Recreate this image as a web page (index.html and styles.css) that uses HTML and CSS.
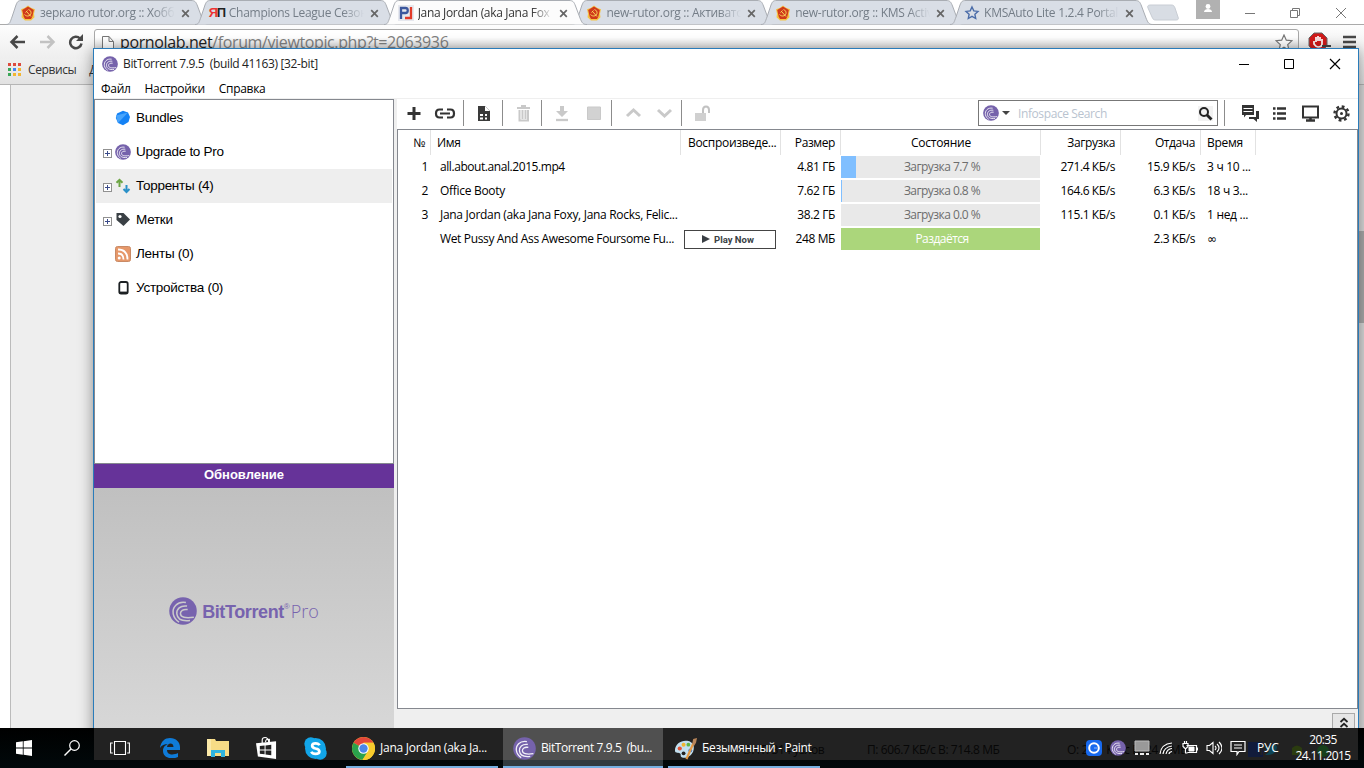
FILE: index.html
```html
<!DOCTYPE html>
<html lang="ru">
<head>
<meta charset="utf-8">
<title>BitTorrent 7.9.5</title>
<link rel="stylesheet" href="styles.css">
</head>
<body>
<svg class="defs" width="0" height="0">
  <symbol id="bt" viewBox="0 0 24 24"><circle cx="12" cy="12" r="11.8"/><path d="M14.500 4.800C7 3.500 2.600 9 3.600 14.500c.6 3 2.400 5.400 5 7M15.500 7.800C9.500 7 6.300 10.500 6.700 14.500c.5 4.200 4.500 6.500 11.300 5.700M16 10.800c-4-.6-6.300 1.200-6.200 3.600.2 3 4 4 11.500 3" fill="none" stroke="#fff" stroke-opacity=".9" stroke-width="1.350"/></symbol>
  <symbol id="btflat" viewBox="0 0 24 24"><circle cx="12" cy="12" r="11.8"/><path d="M14.500 4.800C7 3.500 2.600 9 3.600 14.500c.6 3 2.400 5.400 5 7M15.500 7.800C9.500 7 6.300 10.500 6.700 14.500c.5 4.200 4.500 6.500 11.300 5.700M16 10.800c-4-.6-6.300 1.200-6.200 3.600.2 3 4 4 11.500 3" fill="none" stroke="#cbcbcb" stroke-width="1.300"/></symbol>
  <symbol id="tab" viewBox="0 0 206 25"><path d="M1 24.500C5 24.500 5 22 7 17L11 5C12.500 1.500 13 .5 17 .5H186C190 .5 191 2 192.500 6L197 18C199 23 200 24.500 204 24.500"/></symbol>
  <symbol id="rutor" viewBox="0 0 16 16"><path d="M8 .5l3 2.200 4 1.500-1 4.500.5 3.500-3.500 3.300H5L1.500 12.200 2 8.700 1 4.200l4-1.500z" fill="#f6c344"/><path d="M8 1.500l5.800 3.500-1.500 6.700L11 14H5L3.700 11.700 2.200 5z" fill="#d03a1c"/><path d="M8.500 4.500c4 1.500 3 6.500-1 6.500-1.500 0-2.500-1-3-1.500M5.500 7.500l2-2M6.500 6.500l4.500 5" fill="none" stroke="#f9d75a" stroke-width="1"/></symbol>
  <symbol id="x" viewBox="0 0 9 9"><path d="M1.200 1.200l6.600 6.600M7.800 1.200L1.200 7.800" fill="none" stroke="currentColor" stroke-width="1.700"/></symbol>
</svg>
<div class="desktop">
  <div class="browser">
    <div class="tabs">
      <div class="tab"><svg class="shape"><use href="#tab"/></svg><svg class="fav"><use href="#rutor"/></svg><span class="label">зеркало rutor.org :: Хобби</span><svg class="close"><use href="#x"/></svg></div>
      <div class="tab"><svg class="shape"><use href="#tab"/></svg><span class="fav yap"><b>Я</b>П</span><span class="label">Champions League Сезон</span><svg class="close"><use href="#x"/></svg></div>
      <div class="tab active"><svg class="shape"><use href="#tab"/></svg><svg class="fav" viewBox="0 0 16 16"><path d="M0 0h16v16H0z" fill="#e6e8ee"/><path d="M3 14V3h4.500c3 0 3 5 0 5H4" fill="none" stroke="#3b579d" stroke-width="2.300"/><path d="M13 2v11H7" fill="none" stroke="#e23a28" stroke-width="2.300"/></svg><span class="label jj">Jana Jordan (aka Jana Fox</span><svg class="close"><use href="#x"/></svg></div>
      <div class="tab"><svg class="shape"><use href="#tab"/></svg><svg class="fav"><use href="#rutor"/></svg><span class="label">new-rutor.org :: Активато</span><svg class="close"><use href="#x"/></svg></div>
      <div class="tab"><svg class="shape"><use href="#tab"/></svg><svg class="fav"><use href="#rutor"/></svg><span class="label">new-rutor.org :: KMS Activ</span><svg class="close"><use href="#x"/></svg></div>
      <div class="tab"><svg class="shape"><use href="#tab"/></svg><svg class="fav" viewBox="0 0 16 16"><path d="M8 2l1.800 3.900 4.200.5-3.100 2.900.8 4.200L8 11.400l-3.700 2.100.8-4.200L2 6.400l4.200-.5z" fill="none" stroke="#4a6ca8" stroke-width="1.400"/></svg><span class="label">KMSAuto Lite 1.2.4 Portal</span><svg class="close"><use href="#x"/></svg></div>
      <svg class="newtab" viewBox="0 0 34 17"><path d="M5 1h20c3 0 3 1 4 3l3 9c1 2 0 3-2 3H10c-3 0-3-1-4-3L2 4C1 2 2 1 5 1z" fill="#d8dde4" stroke="#c8cdd4"/></svg>
      <div class="user"><svg width="24" height="19"><circle cx="12" cy="6.500" r="2.400" fill="#fff"/><path d="M8 12c0-4 8-4 8 0z" fill="#fff"/></svg></div>
      <svg class="winbtns" viewBox="0 0 110 14" fill="none" stroke="#777"><path d="M0 7.500h10M45.500 4.500h7v7h-7zM47.500 4.500v-2h7v7h-2M91 2l10 10M101 2L91 12"/></svg>
    </div>
    <div class="navbar">
      <svg class="nav" viewBox="0 0 80 16" fill="none"><path d="M16 8H3M8.500 2L2.500 8l6 6" stroke="#484848" stroke-width="2.500"/><path d="M31 8h13M38.500 2l6 6-6 6" stroke="#c2c2c2" stroke-width="2.500"/><path d="M71 4.500a5.700 5.700 0 1 0 1.500 5" stroke="#484848" stroke-width="2.500"/><path d="M74 0v7h-7z" fill="#484848"/></svg>
      <div class="omni"><svg width="12" height="17" viewBox="0 0 12 17"><path d="M.5.500h6.500l4.500 5V16H.5zM7 .5v5h4.500" fill="#fff" stroke="#777"/></svg><span class="url"><b>pornolab.net</b>/forum/viewtopic.php?t=2063936</span><svg class="star" viewBox="0 0 18 18"><path d="M9 1l2.300 5.200 5.700.5-4.300 3.900 1.300 5.700L9 13.300l-5 3 1.300-5.700L1 6.700l5.700-.5z" fill="#fff" stroke="#777" stroke-width="1.200"/></svg></div>
      <svg class="abp" viewBox="0 0 24 20"><path d="M6 1h8l5 5v8l-5 5H6l-5-5V6z" fill="#d11a1a" stroke="#666"/><path d="M6 9v3q2 3 4 3 4 0 4-3V7M8 10V5M10 9V4M12 9V5" fill="none" stroke="#fff" stroke-width="1.700"/><path d="M14 14h9" stroke="#444" stroke-width="2"/></svg>
      <svg class="burger" viewBox="0 0 13 16"><path d="M0 3h13M0 8h13M0 13h13" stroke="#484848" stroke-width="2.600"/></svg>
    </div>
    <div class="bookmarks"><span class="apps"><i></i><i></i><i></i><i></i><i></i><i></i><i></i><i></i><i></i></span><span class="svc">Сервисы</span><span class="dd">Д</span></div>
    <div class="page"><div class="sheet"></div><div class="scroll"><i></i></div></div>
  </div>

  <div class="window">
    <div class="title"><svg class="bt16"><use href="#bt"/></svg><span class="caption">BitTorrent 7.9.5 &nbsp;(build 41163) [32-bit]</span>
      <svg class="ctl" viewBox="0 0 110 14" fill="none" stroke="#000"><path d="M0 7.500h10M45.500 2.500h9v9h-9z"/><path d="M91 2l10 10M101 2L91 12" stroke-width="1.200"/></svg></div>
    <div class="menu"><span>Файл</span><span>Настройки</span><span>Справка</span></div>
    <div class="body">
      <div class="side">
        <div class="tree">
          <div class="node"><span class="ex"></span><svg class="ni" viewBox="0 0 16 16"><path d="M8 .8l5 1.700 2 4.500-1.500 5-5.500 3.200-5-2.200L.8 8 2 3.500z" fill="#1482f5"/><path d="M1 5.500L13 2.500 3 13z" fill="#48a4fb"/></svg><span>Bundles</span></div>
          <div class="node"><span class="ex box"></span><svg class="ni bt16"><use href="#bt"/></svg><span>Upgrade to Pro</span></div>
          <div class="node sel"><span class="ex box"></span><svg class="ni" viewBox="0 0 16 16" fill="none" stroke-width="2"><path d="M4.500 9V2M1.500 4.800l3-3 3 3" stroke="#6da544"/><path d="M11.500 7v7M8.500 11l3 3 3-3" stroke="#2b91c8"/></svg><span>Торренты (4)</span></div>
          <div class="node"><span class="ex box"></span><svg class="ni" viewBox="0 0 16 16"><path d="M1.500 1h7L15 7.500 8.500 14 1.500 8z" fill="#3a4045"/><circle cx="5" cy="4.500" r="1.600" fill="#fff"/></svg><span>Метки</span></div>
          <div class="node"><span class="ex"></span><svg class="ni" viewBox="0 0 16 16"><rect x=".5" y=".5" width="15" height="15" rx="2" fill="#e6986a" stroke="#c98a66"/><circle cx="4.200" cy="12" r="1.500" fill="#fff"/><path d="M3 7.500q5.500 0 5.500 6M3 3.500q9.500 0 9.500 10" fill="none" stroke="#fff" stroke-width="1.800"/></svg><span>Ленты (0)</span></div>
          <div class="node"><span class="ex"></span><svg class="ni" viewBox="0 0 16 16"><rect x="4.300" y="2" width="8.400" height="11.500" rx="1.800" fill="#fff" stroke="#1c2023" stroke-width="1.800"/><path d="M4.500 12.700h8" stroke="#1c2023" stroke-width="2.200"/></svg><span>Устройства (0)</span></div>
        </div>
        <div class="update">Обновление</div>
        <div class="promo"><svg width="28" height="28" fill="#7763ae"><use href="#btflat"/></svg><span class="brand">BitTorrent</span><sup>®</sup><span class="pro">Pro</span></div>
      </div>
      <div class="main">
        <div class="tools">
          <svg class="tb" viewBox="0 0 310 28" fill="none"><path d="M16 8v13M9.500 14.500h13" stroke="#333" stroke-width="3"/><path d="M45 10.500h-3.500q-3.500 0-3.500 4t3.500 4H45M49 10.500h3.500q3.500 0 3.500 4t-3.500 4H49M42 14.500h10" stroke="#333" stroke-width="2.200"/><path d="M80 7h7l5 5v10H80z" fill="#3a3a3a"/><path d="M87 7v5h5M82 15h3v2h-3zM87 15h2v2h-2zM82 18.500h3v2h-3zM87 18.500h2v2h-2z" fill="#fff"/><path d="M65.500 1v26M104.500 1v26M143.500 1v26M213.500 1v26M283.500 1v26" stroke="#8c8c8c"/><g stroke="#c9c9c9" stroke-width="2"><path d="M119 9h13M123 7h5M121.500 11v10.500h8.500V11M124.500 11v9M127.500 11v9"/><path d="M158 21h12" stroke-width="2.300"/><path d="M162 7h4v5h4l-6 6-6-6h4z" fill="#c9c9c9" stroke="none"/><path d="M189.500 8h13v12.500h-13z" fill="#d2d2d2" stroke-width="1"/><path d="M229 17l6.500-6 6.500 6M260 11l6.500 6 6.500-6" stroke-width="3"/></g></svg>
          <svg class="lock" viewBox="0 0 18 18"><path d="M1 8h11v8H1z" fill="#d0d0d0"/><path d="M9 8V5q0-3.500 3-3.500T15 5v3" fill="none" stroke="#c2c2c2" stroke-width="2"/></svg>
          <div class="search"><svg class="bt16"><use href="#bt"/></svg><i class="caret"></i><span class="hint">Infospace Search</span><svg class="mag" viewBox="0 0 15 15"><path d="M0 0h15v15H0z" fill="#f2f2f2"/><circle cx="6" cy="6" r="4" fill="none" stroke="#222" stroke-width="2"/><path d="M9 9l4.500 4.500" stroke="#222" stroke-width="2.800"/></svg></div>
          <svg class="right" viewBox="0 0 134 28" fill="none" stroke="#333"><path d="M5.500 1v26" stroke="#8c8c8c"/><path d="M23 6h12v10H27l-2 2.500V16h-2z" fill="#333" stroke="none"/><path d="M24.500 9.500h9M24.500 12.500h9" stroke="#fff"/><path d="M37 12h3v8h-2v3l-3.500-3H30v-2h7z" fill="#333" stroke="none"/><path d="M58 9.500h9M58 14.500h9M58 19.500h9" stroke-width="2.500"/><path d="M54 9.500h2.500M54 14.500h2.500M54 19.500h2.500" stroke-width="2.500"/><path d="M84 7.500h15v11H84z" stroke-width="2"/><path d="M91.500 18v3M87 21.500h9" stroke-width="2.500"/><circle cx="122.500" cy="14.500" r="7" stroke-width="2.400" stroke-dasharray="2.800 2.698"/><circle cx="122.500" cy="14.500" r="5" stroke-width="2"/><circle cx="122.500" cy="14.500" r="1.500" fill="#333" stroke="none"/></svg>
        </div>
        <div class="list">
          <div class="row head"><span class="r no">№</span><span>Имя</span><span class="playh">Воспроизведе...</span><span class="r">Размер</span><span class="c">Состояние</span><span class="r">Загрузка</span><span class="r">Отдача</span><span>Время</span></div>
          <div class="row"><span class="r num">1</span><span class="name n1">all.about.anal.2015.mp4</span><span></span><span class="r">4.81 ГБ</span><span class="bar"><i style="width:7.7%"></i><em>Загрузка 7.7 %</em></span><span class="r">271.4 КБ/s</span><span class="r">15.9 КБ/s</span><span class="eta">3 ч 10 ...</span></div>
          <div class="row"><span class="r num">2</span><span class="name">Office Booty</span><span></span><span class="r">7.62 ГБ</span><span class="bar"><i style="width:0.6%"></i><em>Загрузка 0.8 %</em></span><span class="r">164.6 КБ/s</span><span class="r">6.3 КБ/s</span><span class="eta">18 ч 3...</span></div>
          <div class="row"><span class="r num">3</span><span class="name">Jana Jordan (aka Jana Foxy, Jana Rocks, Felic...</span><span></span><span class="r">38.2 ГБ</span><span class="bar"><i style="width:0%"></i><em>Загрузка 0.0 %</em></span><span class="r">115.1 КБ/s</span><span class="r">0.1 КБ/s</span><span class="eta">1 нед ...</span></div>
          <div class="row"><span></span><span class="name n4">Wet Pussy And Ass Awesome Foursome Fu...</span><span class="play"><b><svg width="8" height="8"><path d="M0 0l8 4-8 4z" fill="#3a3f44"/></svg>Play Now</b></span><span class="r">248 МБ</span><span class="bar seed"><em>Раздаётся</em></span><span></span><span class="r">2.3 КБ/s</span><span class="eta inf">∞</span></div>
        </div>
        <div class="foot"><span class="up"><svg width="10" height="12" fill="none" stroke="#222" stroke-width="1.800"><path d="M1.500 5L5 1.800 8.500 5M1.500 10L5 6.800 8.500 10"/></svg></span></div>
      </div>
    </div>
  </div>

  <div class="taskbar">
    <div class="ghost"><span class="g1">DHT: 314 узлов</span><span class="g2">П: 606.7 КБ/с В: 714.8 МБ</span><span class="g3">О: 21.1 КБ/с В: 24.4 МБ</span><i class="fb">f</i><svg class="gi" width="80" height="16"><path d="M2 4q6 3 8-1 4-2 5 2-1 9-12 8l4-3z" fill="#0c4455"/><path d="M30 6q5-5 10 0v7H30z" fill="#2b3c10"/><circle cx="61" cy="9" r="6" fill="#17401b"/></svg></div>
    <div class="pins">
      <svg viewBox="0 0 16 16" class="p win"><path d="M0 2.300L6.800 1.300V7.600H0zM7.600 1.200L16 0v7.600H7.600zM0 8.400h6.800v6.300L0 13.700zM7.600 8.400H16V16l-8.400-1.200z" fill="#fff"/></svg>
      <svg viewBox="0 0 16 16" class="p"><circle cx="10.500" cy="5.500" r="4.800" fill="none" stroke="#fff" stroke-width="1.200"/><path d="M7 9L.5 15.500" stroke="#fff" stroke-width="1.400"/></svg>
      <svg viewBox="0 0 20 16" class="p tv"><path d="M4.500 1.500h11v13h-11zM2.800 3H.6v10h2.200M17.200 3h2.200v10h-2.200" fill="none" stroke="#fff" stroke-width="1.100"/></svg>
      <svg viewBox="0 0 20 20" class="p big"><path d="M0 10C1 3 5 0 10 0c6 0 10 4 10 9v3H7c0 5 6 5.500 11 3v4c-6 3-15 1-15-6 0-4 2-5.500 5-7C4 6 2 7 0 10zm7-1h6.500C13.500 4 7.500 4.500 7 9z" fill="#0f7bd8"/></svg>
      <svg viewBox="0 0 22 18" class="p fold"><path d="M0 0h8l1 2h13v15H0z" fill="#f7dc86"/><path d="M0 0h4v17H0z" fill="#fbe9a8"/><path d="M4 18v-7h14v7h-4v-4H8v4z" fill="#2fb4df"/></svg>
      <svg viewBox="0 0 22 24" class="p store"><path d="M6.500 8V4q0-3 3-3t4 5M10 6q0-4 4-3v4" fill="none" stroke="#fff" stroke-width="1.200"/><path d="M0 7l21-2v18.500L2 21z" fill="#fff"/><path d="M4 10l5-.5v4H4zM10 9.300l6-.6v4.800h-6zM4 14.500h5v4L4 18zM10 14.500h6v5l-6-.6z" fill="#222"/></svg>
      <svg viewBox="0 0 22 22" class="p skype"><circle cx="11" cy="11" r="10" fill="#12a5e8"/><circle cx="6.500" cy="6.500" r="6.200" fill="#12a5e8"/><circle cx="15.500" cy="15.500" r="6.200" fill="#12a5e8"/><path d="M14.800 8Q14 6 11 6 7.800 6 7.800 8.300 7.800 10.200 11 11q3.700.7 3.700 2.800 0 2.300-3.700 2.300-3 0-4-2" fill="none" stroke="#fff" stroke-width="2.600"/></svg>
    </div>
    <div class="apps-run">
      <div class="task"><svg class="ti" viewBox="0 0 22 22"><circle cx="11" cy="11" r="11" fill="#f7cb2d"/><path d="M11 11L1.500 5.500A11 11 0 0 1 20.500 5.500H11z" fill="#e2473a"/><path d="M11 11L1.500 5.500A11 11 0 0 0 10 22l5-8z" fill="#2ba24c"/><path d="M15 14l-5 8A11 11 0 0 0 20.500 5.500H11z" fill="#f7cb2d"/><circle cx="11" cy="11" r="5" fill="#fff"/><circle cx="11" cy="11" r="4" fill="#4a86e8"/></svg><span>Jana Jordan (aka Ja...</span></div>
      <div class="task cur"><svg class="ti"><use href="#bt"/></svg><span class="t2">BitTorrent 7.9.5 &nbsp;(bu...</span></div>
      <div class="task"><svg class="ti" viewBox="0 0 24 24"><path d="M1 14C1 7 8 3 14 4c6 1 8 6 6 11s-8 8-12 6c-2-1 0-3-2-4s-5 0-5-3z" fill="#c2dfef"/><circle cx="6" cy="12" r="2.200" fill="#e45335"/><circle cx="10" cy="8" r="2.100" fill="#f2b632"/><circle cx="15" cy="8" r="2" fill="#5eb447"/><circle cx="17" cy="14" r="2" fill="#4580d0"/><circle cx="10" cy="17" r="2" fill="#222"/><path d="M13 23l7-16" stroke="#e59a45" stroke-width="2.300"/><path d="M19 7l1-5 4-1-1 5-2 3z" fill="#b88559"/></svg><span class="t3">Безымянный - Paint</span></div>
    </div>
    <div class="tray">
      <svg class="t" viewBox="0 0 16 16"><rect width="16" height="16" rx="4" fill="#1769ee"/><circle cx="8" cy="8" r="4.800" fill="none" stroke="#fff" stroke-width="2"/><path d="M8 8h3" stroke="#8bb9ff"/></svg>
      <svg class="t"><use href="#bt"/></svg>
      <svg class="t" viewBox="0 0 16 16"><path d="M1 1h14v10H1z" fill="#999" stroke="#bbb"/><path d="M1 14h3M6 14h4M12 14h3" stroke="#eee" stroke-width="2"/></svg>
      <svg class="t" viewBox="0 0 16 16" fill="none" stroke="#fff" stroke-width="1.200"><path d="M2 14Q3 4 14 3M5 14Q6 7 14 6M8 14q1-5 6-5.500M11 14q0-2 3-2.500"/></svg>
      <svg class="t" viewBox="0 0 16 16" fill="none" stroke="#fff"><path d="M4.500 5.500h10v7h-9M1 3.500h5v3l-2 2H3l-2-2zM2.500 1v2M4.500 1v2M3.500 8v5h2M15.500 7.500v3" stroke-width="1.200"/><path d="M7 7h5v4H7z" fill="#fff"/></svg>
      <svg class="t" viewBox="0 0 16 16" fill="none" stroke="#fff" stroke-width="1.100"><path d="M1 5.500h2.500L7 2.500v11L3.500 10.500H1zM9 6q2 2 0 4M11 4q4 4 0 8M13 2q6 6 0 12"/></svg>
      <svg class="t" viewBox="0 0 16 16" fill="none" stroke="#fff" stroke-width="1.200"><path d="M1 1.500h14v10H9L7 14.500v-3H1zM4 5h8M4 8h8"/></svg>
      <span class="lang">РУС</span>
      <div class="clock"><span>20:35</span><span>24.11.2015</span></div>
    </div>
  </div>
</div>
</body>
</html>
```
FILE: styles.css
```css
* { box-sizing: border-box; }
body { margin: 0; font: 12px/16px "Open Sans", "Noto Sans", sans-serif; color: #000; overflow: hidden; }
svg { display: block; flex: none; }
span { white-space: nowrap; }
.defs { position: absolute; }
.desktop { position: relative; width: 1364px; height: 768px; overflow: hidden; background: #fff; }
#bt circle { fill: #7562ab; }

/* browser behind the client window */
.browser { display: flex; flex-direction: column; height: 768px; }
.tabs { display: flex; align-items: flex-start; height: 25px; padding-left: 5px; border-bottom: 1px solid #aaa; }
.tab { position: relative; display: flex; align-items: center; flex: none; width: 206px; height: 25px; margin-right: -17.2px; padding: 1px 0 0 15px; color: #747d87; }
.shape { position: absolute; left: 0; top: 0; width: 206px; height: 25px; fill: #d9dee6; stroke: #a9adb3; z-index: -1; }
.tab.active { z-index: 2; color: #333; }
.tab.active .shape { fill: #fcfcfc; }
.tabs, .tab { isolation: isolate; }
.fav { width: 16px; height: 16px; margin-right: 4px; flex: none; }
.yap { font: bold 13px/16px "Liberation Sans", sans-serif; letter-spacing: -1.5px; color: #222; }
.yap b { color: #e33; }
.label { width: 135px; overflow: hidden; letter-spacing: -.28px; -webkit-mask-image: linear-gradient(90deg, #000 84%, transparent); mask-image: linear-gradient(90deg, #000 84%, transparent); }
.jj { letter-spacing: -.32px; }
.close { width: 9px; height: 9px; margin-left: 6px; color: #666; }
.newtab { width: 34px; height: 17px; margin: 4px 0 0 8px; }
.user { width: 24px; height: 19px; margin-left: 16px; background: #b1b1b1; }
.winbtns { width: 110px; height: 14px; margin: 6px 0 0 25px; }
.navbar { display: flex; align-items: flex-start; height: 34px; background: linear-gradient(#fdfdfd, #eee); padding: 4px 0 0 9px; }
.nav { width: 80px; height: 16px; margin: 5px 5px 0 0; }
.omni { display: flex; width: 1205px; height: 27px; border: 1px solid #a8a8a8; border-radius: 3px; background: linear-gradient(#fff 30%, #ddd 75%); padding: 6px 5px 0 7px; }
.url { font-size: 16px; line-height: 22px; margin: -5px 0 0 6px; color: #808080; letter-spacing: -.38px; }
.url b { font-weight: 400; color: #222; }
.star { width: 18px; height: 18px; margin: -2px 0 0 auto; }
.abp { width: 24px; height: 20px; margin: 3px 0 0 9px; }
.burger { width: 13px; height: 16px; margin: 5px 0 0 11px; }
.bookmarks { display: flex; align-items: center; height: 26px; border-bottom: 1px solid #b5b5b5; background: linear-gradient(#efefef, #e2e2e2); padding: 0 0 4px 8px; color: #333; }
.svc { letter-spacing: -.4px; }
.apps { display: grid; grid-template-columns: repeat(3, 3px); gap: 2px; margin-right: 7px; }
.apps i { height: 3px; background: #dd4b3e; }
.apps i:nth-child(4), .apps i:nth-child(7) { background: #3aa757; }
.apps i:nth-child(5) { background: #4285f4; }
.apps i:nth-child(6), .apps i:nth-child(8), .apps i:nth-child(9) { background: #f2b632; }
.dd { margin-left: 13px; }
.page { flex: 1; display: flex; padding-left: 10px; }
.sheet { flex: 1; border-left: 1px solid #bbb; background: #eee; }
.scroll { width: 17px; background: #dadada; padding-top: 146px; }
.scroll i { display: block; height: 92px; background: #aaa; }

/* client window */
.window { position: absolute; left: 93px; top: 48px; width: 1266px; height: 712px; display: flex; flex-direction: column; border: 1px solid #2a7cba; background: #fff; box-shadow: 0 2px 14px rgba(0,0,0,.42); }
.title { display: flex; align-items: center; height: 29px; padding: 0 9px 0 8px; }
.bt16 { width: 16px; height: 16px; }
.caption { margin-left: 5px; letter-spacing: -.36px; color: #222; }
.ctl { width: 110px; height: 14px; margin-left: auto; }
.menu { display: flex; gap: 14px; height: 20px; padding: 3px 0 0 7px; letter-spacing: -.3px; }
.body { flex: 1; display: flex; gap: 3px; background: #efefef; padding-top: 1px; }
.side { width: 300px; display: flex; flex-direction: column; font-family: "Liberation Sans", Arial, sans-serif; }
.tree { height: 365px; border: 1px solid #85888f; background: #fff; padding: 1px; }
.node { display: flex; align-items: center; height: 34px; padding-left: 7px; font-size: 13.5px; letter-spacing: -.27px; }
.sel { background: #eee; }
.ex { width: 9px; height: 9px; margin: 2px 3px 0 0; }
.box { border: 1px solid #919191; background: linear-gradient(#3b4b8a, #3b4b8a) center/5px 1px no-repeat, linear-gradient(#3b4b8a, #3b4b8a) center/1px 5px no-repeat, #fff; }
.ni { width: 16px; height: 16px; margin-right: 5px; }
.update { height: 24px; background: #663399; color: #fff; font: bold 13px/22px "Liberation Sans", Arial, sans-serif; text-align: center; }
.promo { flex: 1; display: flex; justify-content: center; padding-top: 109px; background: linear-gradient(#c0c0c0, #d7d7d7 240px); color: #7763ae; }
.brand { font: bold 18px/30px "Liberation Sans", Arial, sans-serif; letter-spacing: -.4px; margin-left: 5px; }
.promo sup { font-size: 8px; line-height: 20px; }
.pro { font: 300 18px/28px "Open Sans", sans-serif; margin-left: 1px; }
.main { flex: 1; display: flex; flex-direction: column; }
.tools { display: flex; align-items: flex-start; height: 30px; background: #fff; }
.tb { width: 310px; height: 28px; margin-left: 1px; }
.lock { width: 18px; height: 18px; margin: 6px 0 0 -14px; }
.search { display: flex; align-items: center; width: 240px; height: 26px; margin: 1px 0 0 266px; border: 1px solid #777; padding: 0 4px; color: #b9c3cf; }
.hint { padding-top: 2px; letter-spacing: -.4px; }
.caret { border: 4px solid transparent; border-top-color: #444; border-bottom: 0; margin: 0 8px 0 3px; }
.mag { width: 15px; height: 15px; margin-left: auto; }
.right { width: 134px; height: 28px; margin-left: 1px; }
.list { height: 580px; border: 1px solid #85888f; background: #fff; }
.row { display: grid; grid-template-columns: 33px 250px 100px 60px 200px 80px 80px 55px; height: 24px; align-items: center; letter-spacing: -.3px; }
.row > span { padding: 0 6px; }
.head { height: 25px; }
.head > span { line-height: 25px; border-right: 1px solid #e2e2e2; padding-right: 5px; }
.head .playh, .head .c { letter-spacing: -.2px; }
.r { text-align: right; }
.c { text-align: center; }
.row > .r { letter-spacing: -.4px; }
.row .num { padding-right: 3px; }
.row .name { padding-left: 9px; }
.row .n1 { letter-spacing: -.43px; }
.row .n4 { letter-spacing: -.35px; }
.row .inf { font-family: "DejaVu Sans", sans-serif; }
.row .playh { padding: 0 0 0 7px; letter-spacing: -.3px; }
.row .bar { position: relative; height: 22px; margin-right: 1px; padding: 0 0 0 3px; background: #e9e9e9; color: #6d6d6d; text-align: center; line-height: 22px; letter-spacing: -.55px; }
.bar i { position: absolute; left: 0; top: 0; height: 22px; background: #80bfff; }
.bar em { position: relative; font-style: normal; }
.row .seed { background: #abd67b; color: #fff; }
.row .play { padding: 0 5px 0 3px; }
.play b { display: flex; align-items: center; justify-content: center; gap: 4px; height: 19px; padding-right: 4px; border: 1px solid #444; font: bold 9.5px/17px Roboto, sans-serif; letter-spacing: 0; color: #3a3f44; }
.foot { flex: 1; padding: 4px 3px 0; display: flex; justify-content: flex-end; }
.up { width: 23px; height: 20px; border: 1px solid #aaa; background: #e6e6e6; display: flex; justify-content: center; padding-top: 3px; }

/* taskbar */
.taskbar { position: absolute; left: 0; top: 728px; width: 1364px; height: 40px; display: flex; background: linear-gradient(#000 0, #01090b); color: #fff; letter-spacing: -.25px; }
.ghost { position: absolute; left: 94px; top: 0; width: 1264px; height: 32px; background: #222; color: #070707; letter-spacing: -.4px; }
.ghost > * { position: absolute; top: 14px; }
.g1 { left: 649px; }
.g2 { left: 773px; }
.g3 { left: 973px; }
.fb { left: 1154px; width: 15px; height: 15px; background: #111b3b; font: bold 14px/17px "Liberation Sans", sans-serif; text-align: right; color: #222; }
.gi { left: 1168px; }
.pins, .apps-run, .tray { position: relative; display: flex; }
.pins { width: 346px; height: 40px; align-items: center; padding-left: 16px; }
.p { width: 16px; height: 16px; margin-right: 32px; }
.tv { width: 20px; margin: 0 31px 0 -2px; }
.big { width: 20px; height: 20px; margin: 0 28px 0 -1px; }
.fold { width: 22px; height: 18px; margin: 0 27px 0 -1px; }
.store { width: 21px; height: 24px; margin-right: 27px; }
.skype { width: 23px; height: 23px; margin: 0; }
.apps-run { gap: 5px; }
.task { display: flex; align-items: center; width: 152px; height: 40px; padding: 2px 0 0 6px; border-bottom: 2px solid #76b0e2; gap: 5px; }
.cur { width: 160px; padding-left: 10px; background: linear-gradient(#505050 32px, #323b3f 32px); }
.t2 { letter-spacing: -.42px; }
.t3 { letter-spacing: -.32px; }
.ti { width: 23px; height: 23px; }
.tray { align-items: center; margin-left: 266px; gap: 8px; }
.t { width: 16px; height: 16px; }
.lang { width: 23px; margin-left: 3px; }
.clock { display: flex; flex-direction: column; align-items: center; width: 56px; margin-left: 7px; line-height: 16px; padding-top: 0; letter-spacing: -.6px; }
```
